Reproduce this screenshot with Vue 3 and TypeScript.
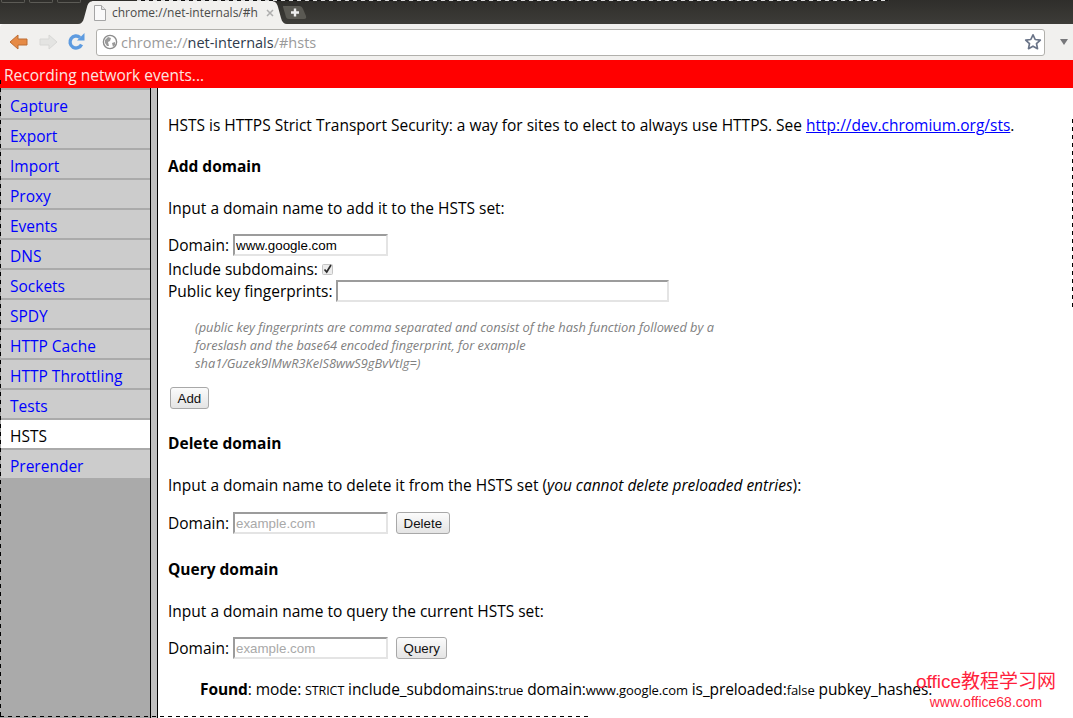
<script setup lang="ts">
const tabs = ['Capture', 'Export', 'Import', 'Proxy', 'Events', 'DNS', 'Sockets', 'SPDY', 'HTTP Cache', 'HTTP Throttling', 'Tests', 'HSTS', 'Prerender']
</script>

<template>
  <div class="window">
    <div class="tabstrip">
      <div class="wm-buttons"><i></i><i></i><i></i></div>
      <svg class="tab-shape" width="210" height="24" viewBox="0 0 210 24">
        <path d="M0 24c3 0 5-2 6-6l3-11c1-4 3-6 7-6h177c4 0 6 2 7 6l3 11c1 4 3 6 6 6z" fill="#f1f0ee" />
      </svg>
      <div class="tab">
        <svg class="page-icon" width="14" height="16" viewBox="0 0 14 16">
          <path d="M1.5 .5h7l4 4v11h-11z" fill="#fafafa" stroke="#a5a5a5" />
          <path d="M8.5 .5v4h4" fill="#e2e2e2" stroke="#a5a5a5" />
        </svg>
        <span class="tab-title">chrome://net-internals/#h</span>
        <svg class="tab-close" width="8" height="8" viewBox="0 0 8 8">
          <path d="M1 1l6 6M7 1l-6 6" stroke="#aeaeae" stroke-width="1.5" />
        </svg>
      </div>
      <svg class="new-tab" width="24" height="13" viewBox="0 0 24 13">
        <path d="M0 0h16c2 0 3 1 4 3l3 7c.5 2 0 3-2 3H6c-2 0-2.500-1-3-2L0 1z" fill="#5a5953" />
        <path d="M8 6.500h8M12 2.500v8" stroke="#eee" stroke-width="2.400" />
      </svg>
    </div>

    <div class="toolbar">
      <svg class="nav" width="20" height="18" viewBox="0 0 20 18">
        <path d="M1 9l8-7v4h9v6H9v4z" fill="#e68a45" stroke="#bd6d33" stroke-linejoin="round" />
      </svg>
      <svg class="nav" width="20" height="18" viewBox="0 0 20 18">
        <path d="M19 9l-8-7v4H2v6h9v4z" fill="#e4e4e2" stroke="#d8d8d6" stroke-linejoin="round" />
      </svg>
      <svg class="nav" width="18" height="18" viewBox="0 0 18 18">
        <path d="M14.5 11.500A6 6 0 1 1 13 4.500" fill="none" stroke="#5d9be0" stroke-width="3.400" />
        <path d="M10 7.500h7.500V0z" fill="#5d9be0" />
      </svg>
      <div class="omnibox">
        <svg width="16" height="16" viewBox="0 0 16 16">
          <circle cx="8" cy="8" r="6.600" fill="#fff" stroke="#8c8c8c" stroke-width="1.400" />
          <path d="M3 6l3-3 3 1-1 3-2 1 1 4-2 0-2-3zM10 9l3-1 0 3-2 2z" fill="#9a9a9a" />
        </svg>
        <span class="url"><span class="dim">chrome://</span><span class="host">net-internals</span><span class="dim">/#hsts</span></span>
        <svg class="star" width="18" height="18" viewBox="0 0 18 18">
          <path d="M9 1.800l2.200 4.700 5.100.6-3.800 3.500 1 5.100L9 13.200l-4.500 2.500 1-5.100L1.700 7.100l5.100-.6z" fill="#fff" stroke="#6a7488" stroke-width="1.700" stroke-linejoin="round" />
        </svg>
      </div>
      <span class="menu-arrow"></span>
    </div>

    <div class="status">Recording network events...</div>

    <div class="main">
      <ul class="sidebar">
        <li v-for="t in tabs" :key="t" :class="{ selected: t === 'HSTS' }">
          <a>{{ t }}</a>
        </li>
      </ul>
      <div class="splitter"></div>
      <div class="content">
        <p class="intro">HSTS is HTTPS Strict Transport Security: a way for sites to elect to always use HTTPS. See <a class="link">http://dev.chromium.org/sts</a>.</p>

        <h4 class="add-head">Add domain</h4>
        <p class="lead">Input a domain name to add it to the HSTS set:</p>
        <div class="row first">
          <label>Domain:</label>
          <input class="field" value="www.google.com" />
        </div>
        <div class="row check">
          <label>Include subdomains:</label>
          <svg class="checkbox" width="11" height="11" viewBox="0 0 11 11">
            <rect x=".5" y=".5" width="10" height="10" rx="1" fill="#ececec" stroke="#c4c4c4" />
            <path d="M2.500 5.500l2.200 2.500 4.300-7" fill="none" stroke="#2c2c2c" stroke-width="1.700" />
          </svg>
        </div>
        <div class="row pins">
          <label>Public key fingerprints:</label>
          <input class="field wide" />
        </div>
        <div class="hint">
          (public key fingerprints are comma separated and consist of the hash function followed by a<br />
          foreslash and the base64 encoded fingerprint, for example<br />
          sha1/Guzek9lMwR3KeIS8wwS9gBvVtIg=)
        </div>
        <button class="btn add">Add</button>

        <h4 class="del-head">Delete domain</h4>
        <p class="lead">Input a domain name to delete it from the HSTS set (<em>you cannot delete preloaded entries</em>):</p>
        <div class="row first del-row">
          <label>Domain:</label>
          <input class="field" placeholder="example.com" />
          <button class="btn">Delete</button>
        </div>

        <h4 class="query-head">Query domain</h4>
        <p class="lead">Input a domain name to query the current HSTS set:</p>
        <div class="row first">
          <label>Domain:</label>
          <input class="field" placeholder="example.com" />
          <button class="btn">Query</button>
        </div>
        <div class="found">
          <b>Found</b>: mode: <small class="caps">STRICT</small> include_subdomains:<small>true</small> domain:<small>www.google.com</small> is_preloaded:<small>false</small> pubkey_hashes:
        </div>
      </div>
    </div>

    <div class="watermark">
      <div class="wm-title">office教程学习网</div>
      <div class="wm-url">www.office68.com</div>
    </div>
    <div class="dash-top"></div>
    <div class="dash-left"></div>
    <div class="dash-bottom"></div>
    <div class="dash-right"></div>
  </div>
</template>

<style scoped>
.window {
  position: relative;
  width: 1073px;
  height: 718px;
  overflow: hidden;
  display: flex;
  flex-direction: column;
  background: #fff;
  color: #000;
  font-family: "Open Sans", "Noto Sans", sans-serif;
  font-size: 15.5px;
}
.tabstrip {
  height: 24px;
  flex: none;
  display: flex;
  align-items: flex-end;
  background: linear-gradient(#2f2e2b, #3d3c38);
  position: relative;
}
.wm-buttons {
  position: absolute;
  left: 1px;
  top: 0;
  display: flex;
  gap: 4px;
}
.wm-buttons i {
  width: 22px;
  height: 2px;
  border: 1px solid #5c5b56;
  border-top: 0;
  border-radius: 0 0 2px 2px;
}
.tab-shape {
  position: absolute;
  left: 78px;
  top: 0;
}
.tab {
  position: relative;
  margin-left: 93px;
  width: 190px;
  height: 23px;
  display: flex;
  align-items: center;
  box-sizing: border-box;
}
.page-icon { flex: none; }
.tab-title {
  margin-left: 5px;
  font-size: 12px;
  color: #4a4a48;
  white-space: nowrap;
  width: 150px;
  flex: none;
}
.tab-close {
  margin-left: 4px;
  flex: none;
}
.new-tab {
  position: relative;
  margin-bottom: 5px;
  flex: none;
}
.toolbar {
  height: 36px;
  flex: none;
  display: flex;
  align-items: center;
  padding-left: 9px;
  gap: 9px;
  box-sizing: border-box;
  background: #f1f0ee;
  border-radius: 4px 0 0 0;
}
.omnibox {
  margin-left: 2px;
  width: 949px;
  height: 27px;
  box-sizing: border-box;
  display: flex;
  align-items: center;
  padding: 0 2px 0 5px;
  gap: 3px;
  background: #fff;
  border: 1px solid #b1b0ac;
  border-radius: 3px;
}
.url {
  flex: 1;
  font-size: 14.5px;
  white-space: nowrap;
}
.dim { color: #9a9a9a; }
.host { color: #2f3b4c; }
.menu-arrow {
  margin-left: 6px;
  border-left: 4px solid transparent;
  border-right: 4px solid transparent;
  border-top: 6px solid #77777a;
}
.status {
  height: 28px;
  flex: none;
  line-height: 30px;
  padding-left: 4px;
  background: #f00;
  color: #fce5e0;
}
.main {
  flex: 1;
  min-height: 0;
  display: flex;
}
.sidebar {
  width: 150px;
  flex: none;
  margin: 0;
  padding: 0 0 0 1px;
  box-sizing: border-box;
  list-style: none;
  background: #aaa;
}
.sidebar li {
  height: 28px;
  padding-left: 9px;
  line-height: 32px;
  background: #ccc;
  border-top: 2px solid #aaa;
}
.sidebar li.selected { background: #fff; }
.sidebar li a { color: #00f; }
.sidebar li.selected a { color: #000; }
.splitter {
  width: 8px;
  flex: none;
  box-sizing: border-box;
  background: #c0c0c0;
  border-left: 1px solid #000;
  border-right: 1px solid #000;
}
.content {
  flex: 1;
  min-width: 0;
  padding-left: 10px;
  position: relative;
}
p, h4 { margin: 0; }
.intro { margin-top: 26px; line-height: 22px; }
.link { color: #00f; text-decoration: underline; }
h4 { font-size: 15.5px; font-weight: 700; line-height: 22px; }
.add-head { margin-top: 19px; }
.del-head { margin-top: 23px; }
.query-head { margin-top: 23px; }
.lead { margin-top: 20px; line-height: 22px; }
.row {
  display: flex;
  align-items: center;
  white-space: nowrap;
}
.row.first { margin-top: 14px; height: 24px; gap: 4px; }
.row.first.del-row { margin-top: 15px; }
.row.check { height: 22px; gap: 4px; margin-top: 1px; }
.row.pins { height: 22px; gap: 3px; }
.field {
  width: 155px;
  height: 22px;
  box-sizing: border-box;
  padding: 1px 1px;
  border: 2px solid;
  border-color: #9c9c9c #e4e4e4 #e4e4e4 #9c9c9c;
  background: #fff;
  font: 13.33px "Liberation Sans", sans-serif;
  color: #000;
  outline: none;
}
.field::placeholder { color: #a9a9a9; opacity: 1; }
.field.wide { width: 333px; }
.checkbox { flex: none; }
.hint {
  margin: 16px 0 0 27px;
  font-size: 12.8px;
  font-style: italic;
  line-height: 18px;
  color: #808080;
}
.btn {
  height: 22px;
  padding: 0 6.5px;
  box-sizing: border-box;
  font: 13.33px "Liberation Sans", sans-serif;
  color: #111;
  background: linear-gradient(#fbfbfb, #e4e4e4);
  border: 1px solid #a8a8a8;
  border-radius: 3px;
}
.row .btn { margin-left: 4px; }
.btn.add { display: block; margin: 15px 0 0 2px; }
.found {
  margin: 17px 0 0 32px;
  white-space: nowrap;
  line-height: 24px;
  letter-spacing: -0.1px;
}
.found small { font-size: 13px; }
.found .caps { font-size: 12.5px; }
.watermark {
  position: absolute;
  right: 17px;
  bottom: 8px;
  color: #ff1f3d;
  font-family: "Liberation Sans", "Noto Sans CJK SC", sans-serif;
  text-align: center;
}
.wm-title { font-size: 19px; line-height: 24px; }
.wm-url { font-size: 14px; line-height: 16px; }
.dash-top {
  position: absolute;
  left: 137px;
  top: 0;
  width: 751px;
  height: 1px;
  background: repeating-linear-gradient(90deg, #ddd 0 4px, #111 4px 8px);
}
.dash-left {
  position: absolute;
  left: 0;
  top: 80px;
  bottom: 0;
  width: 1px;
  background: repeating-linear-gradient(#000 0 4px, transparent 4px 8px);
}
.dash-bottom {
  position: absolute;
  left: 0;
  bottom: 1px;
  width: 589px;
  height: 1px;
  background: repeating-linear-gradient(90deg, #000 0 4px, transparent 4px 8px);
}
.dash-right {
  position: absolute;
  right: 0;
  top: 119px;
  height: 191px;
  width: 1px;
  background: repeating-linear-gradient(#000 0 4px, transparent 4px 8px);
}
</style>
